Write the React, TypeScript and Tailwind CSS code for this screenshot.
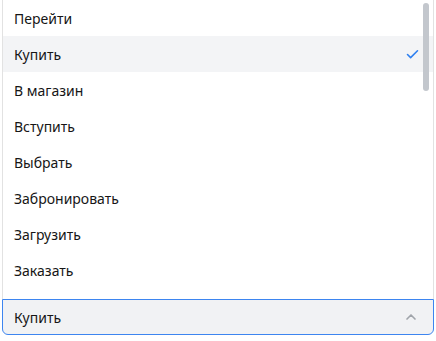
import { Check, ChevronUp } from "lucide-react";

const options = [
  "Перейти",
  "Купить",
  "В магазин",
  "Вступить",
  "Выбрать",
  "Забронировать",
  "Загрузить",
  "Заказать",
];

export default function App() {
  const selected = "Купить";

  return (
    <div className="w-[436px] h-[341px] bg-white px-[2px] text-[14px] text-[#161616] font-['Noto_Sans',sans-serif]">
      <div className="relative h-[299px] overflow-hidden border-x border-[#e2e2e2] bg-white">
        <ul>
          {options.map((o) => (
            <li
              key={o}
              className={`h-9 flex items-center justify-between pl-[11px] pr-[13px] ${o === selected ? "bg-[#f3f4f6]" : ""}`}
            >
              <span>{o}</span>
              {o === selected ? <Check size={15} strokeWidth={2.5} className="text-[#2d7ff0]" /> : null}
            </li>
          ))}
        </ul>
        {/* scrollbar thumb */}
        <div className="absolute top-[3px] right-[4px] w-[6px] h-[88px] rounded-full bg-[#c3c7cd]" />
      </div>
      <button className="w-full h-9 flex items-center justify-between pl-[11px] pr-[14px] bg-[#f1f2f4] border border-[#3d85f0] rounded-b-md">
        <span>{selected}</span>
        <ChevronUp size={16} strokeWidth={2.5} className="text-[#a0a4aa]" />
      </button>
    </div>
  );
}
